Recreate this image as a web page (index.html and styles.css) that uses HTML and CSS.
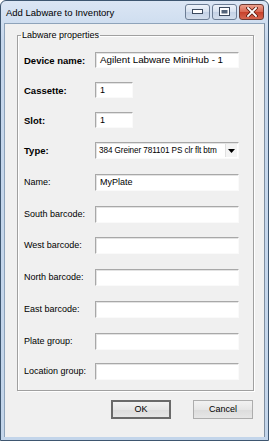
FILE: index.html
```html
<!DOCTYPE html>
<html>
<head>
<meta charset="utf-8">
<link rel="stylesheet" href="styles.css">
</head>
<body>
<div class="window">
  <div class="titlebar">
    <span class="title">Add Labware to Inventory</span>
    <div class="controls">
      <span class="cbtn">
        <svg width="11" height="5" viewBox="0 0 11 5"><rect x="0.5" y="0.5" width="10" height="4" fill="#fff" stroke="#3c4a5e"/></svg>
      </span>
      <span class="cbtn">
        <svg width="11" height="9" viewBox="0 0 11 9"><rect x="0.5" y="0.5" width="10" height="8" fill="#fff" stroke="#3c4a5e"/><rect x="2.5" y="3" width="6" height="3.5" fill="#55657a"/></svg>
      </span>
      <span class="cbtn close">
        <svg width="12" height="10" viewBox="0 0 12 10"><path d="M2 1 L10 9 M10 1 L2 9" stroke="#5a1a10" stroke-width="3.4" stroke-linecap="square"/><path d="M2 1 L10 9 M10 1 L2 9" stroke="#fff" stroke-width="1.8" stroke-linecap="square"/></svg>
      </span>
    </div>
  </div>
  <div class="client">
    <fieldset class="group">
      <legend>Labware properties</legend>
      <div class="form">
        <div class="lbl bold">Device name:</div><div class="field big">Agilent Labware MiniHub - 1</div>
        <div class="lbl bold">Cassette:</div><div class="field short">1</div>
        <div class="lbl bold">Slot:</div><div class="field short">1</div>
        <div class="lbl bold">Type:</div>
        <div class="field select"><span class="seltext">384 Greiner 781101 PS clr flt btm</span><span class="arrow"><svg width="7" height="4" viewBox="0 0 7 4"><path d="M0 0 H7 L3.5 4 Z" fill="#000"/></svg></span></div>
        <div class="lbl">Name:</div><div class="field">MyPlate</div>
        <div class="lbl">South barcode:</div><div class="field"></div>
        <div class="lbl">West barcode:</div><div class="field"></div>
        <div class="lbl">North barcode:</div><div class="field"></div>
        <div class="lbl">East barcode:</div><div class="field"></div>
        <div class="lbl">Plate group:</div><div class="field"></div>
        <div class="lbl">Location group:</div><div class="field"></div>
      </div>
    </fieldset>
    <div class="buttons">
      <div class="btn default">OK</div>
      <div class="btn">Cancel</div>
    </div>
  </div>
</div>
</body>
</html>
```

FILE: styles.css
```css
html, body {
  margin: 0;
  padding: 0;
}
body {
  width: 269px;
  height: 441px;
  overflow: hidden;
  font-family: "Liberation Sans", Arial, sans-serif;
  color: #000;
}
.window {
  box-sizing: border-box;
  width: 269px;
  height: 441px;
  display: flex;
  flex-direction: column;
  background: linear-gradient(#dbe6f4, #c6d7ec 40px, #c3d5ea);
  border: 1px solid #3e5670;
  border-radius: 6px 6px 0 0;
  padding: 0 3px 3px 3px;
}
.titlebar {
  height: 22px;
  display: flex;
  align-items: center;
  justify-content: space-between;
  flex: none;
}
.title {
  font-size: 9.5px;
  padding-left: 2px;
  margin-top: 1px;
}
.controls {
  display: flex;
  gap: 2px;
  margin-top: -1px;
  margin-right: 1px;
}
.cbtn {
  box-sizing: border-box;
  width: 25px;
  height: 16px;
  display: flex;
  align-items: center;
  justify-content: center;
  border: 1px solid #6c7d94;
  border-radius: 3px;
  background: linear-gradient(#eef3fa, #d5e0ee 50%, #c4d2e6 51%, #d3deec);
}
.cbtn.close {
  border-color: #6e3a33;
  background: linear-gradient(#eba08e, #d9654f 50%, #c8402a 51%, #d6654f);
}
.client {
  flex: 1;
  background: #f0f0f0;
  border: 1px solid #8ea3ba;
  border-bottom: none;
  border-right-color: #7e8ea0;
  display: flex;
  flex-direction: column;
}
.group {
  box-sizing: border-box;
  width: 237px;
  margin: 5px 0 0 12px;
  padding: 11px 14px 10px 6px;
  border: 1px solid #a0a0a0;
  box-shadow: inset 1px 1px 0 #fff, 1px 1px 0 #fff;
  min-width: 0;
}
.group legend {
  font-size: 9px;
  line-height: 12px;
  padding: 0 1px;
  margin-left: -3px;
}
.form {
  display: grid;
  grid-template-columns: 71px 144px;
  grid-template-rows: 30px 30px 30px 32px 32px 31px 32px 32px 32px 30px 17px;
  align-items: start;
}
.lbl {
  font-size: 9px;
  line-height: 17px;
  white-space: nowrap;
}
.lbl.bold {
  font-weight: bold;
  font-size: 9.5px;
}
.field {
  box-sizing: border-box;
  height: 17px;
  background: #fff;
  border-top: 1px solid #a8a8a8;
  border-left: 1px solid #a8a8a8;
  border-right: 1px solid #fafafa;
  border-bottom: 1px solid #fafafa;
  box-shadow: inset 1px 1px 0 #e3e3e3;
  font-size: 9px;
  line-height: 15px;
  padding-left: 4px;
  white-space: nowrap;
  overflow: hidden;
}
.field.big {
  height: 16px;
  font-size: 9.8px;
  line-height: 14px;
}
.field.short {
  width: 38px;
  height: 16px;
  line-height: 14px;
}
.field.select {
  display: flex;
  align-items: center;
  justify-content: space-between;
  padding-left: 3px;
  padding-right: 1px;
  height: 17px;
}
.seltext {
  font-size: 8.2px;
  letter-spacing: -0.1px;
  white-space: nowrap;
}
.arrow {
  width: 11px;
  height: 13px;
  display: flex;
  align-items: center;
  justify-content: center;
  background: #f4f4f4;
  border-left: 1px solid #e0e0e0;
  flex: none;
}
.buttons {
  display: flex;
  justify-content: flex-end;
  gap: 22px;
  margin-top: 9px;
  padding-right: 11px;
}
.btn {
  box-sizing: border-box;
  width: 60px;
  height: 19px;
  border: 1px solid #adadad;
  background: linear-gradient(#f2f2f2, #e6e6e6 50%, #dcdcdc 51%, #e6e6e6);
  font-size: 9px;
  line-height: 17px;
  text-align: center;
}
.btn.default {
  border: 2px solid #6a6a6a;
  line-height: 15px;
}
```
